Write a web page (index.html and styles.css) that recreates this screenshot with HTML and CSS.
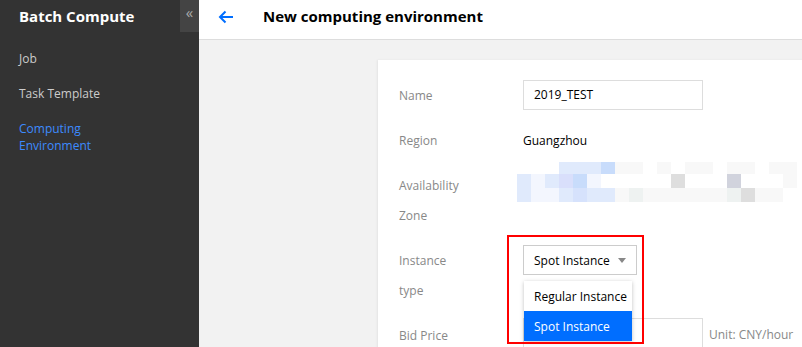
FILE: index.html
```html
<html>
    <head>
        <link rel="stylesheet" href="styles.css">
    </head>
    <body>
    <div class="app">
        <div class="sidebar">
            <div class="brand">
                <span class="brand-title">Batch Compute</span>
                <span class="collapse">&laquo;</span>
            </div>
            <a class="nav">Job</a>
            <a class="nav">Task Template</a>
            <a class="nav active">Computing<br>Environment</a>
        </div>

        <div class="main">
            <div class="topbar">
                <svg class="back" width="16" height="14" viewBox="0 0 16 14">
                    <path d="M15 7H2M7.5 1.5L2 7l5.5 5.5" fill="none" stroke="#006eff" stroke-width="2"/>
                </svg>
                <span class="page-title">New computing environment</span>
            </div>

            <div class="content">
                <div class="card">
                    <div class="row">
                        <div class="label">Name</div>
                        <div class="value"><div class="input">2019_TEST</div></div>
                    </div>
                    <div class="row">
                        <div class="label">Region</div>
                        <div class="value text">Guangzhou</div>
                    </div>
                    <div class="row">
                        <div class="label">Availability Zone</div>
                        <div class="value">
                            <div class="mosaic">
                                <i></i><i></i><i></i><i class="b1"></i><i class="b1"></i><i class="b1"></i><i class="b2"></i><i class="g0"></i><i class="g0"></i><i></i>
                                <i class="g0"></i><i></i><i class="g0"></i><i class="g0"></i><i></i><i class="g0"></i><i class="g0"></i><i></i><i class="g0"></i><i class="g0"></i>

                                <i class="b1"></i><i class="b3"></i><i class="b1"></i><i class="b4"></i><i class="b2"></i><i class="b3"></i><i></i><i></i><i></i><i></i>
                                <i></i><i class="g2"></i><i></i><i></i><i></i><i class="g3"></i><i></i><i></i><i></i><i class="g0"></i>

                                <i class="b1"></i><i class="b3"></i><i class="b3"></i><i class="b1"></i><i class="b5"></i><i class="b1"></i><i class="b1"></i><i class="g0"></i><i class="g1"></i><i class="g0"></i>
                                <i class="g0"></i><i class="g0"></i><i class="g0"></i><i class="g0"></i><i class="g0"></i><i class="g1"></i><i class="g2"></i><i class="g0"></i><i class="g0"></i><i></i>
                            </div>
                        </div>
                    </div>
                    <div class="row">
                        <div class="label">Instance type</div>
                        <div class="value">
                            <div class="select">
                                Spot Instance
                                <span class="caret"></span>
                                <div class="menu">
                                    <div class="option">Regular Instance</div>
                                    <div class="option selected">Spot Instance</div>
                                </div>
                                <div class="highlight"></div>
                            </div>
                        </div>
                    </div>
                    <div class="row bid">
                        <div class="label">Bid Price</div>
                        <div class="value inline">
                            <div class="input tall"></div>
                            <span class="unit">Unit: CNY/hour</span>
                        </div>
                    </div>
                </div>
            </div>
        </div>
    </div>
    </body>
</html>
```

FILE: styles.css
```css
body {
    margin: 0;
    font-family: "Open Sans", "Noto Sans", sans-serif;
    font-size: 12px;
    overflow: hidden;
}
.app {
    display: flex;
    height: 347px;
}
.sidebar {
    width: 199px;
    flex: none;
    background-color: #333333;
}
.brand {
    display: flex;
    justify-content: space-between;
    height: 32px;
}
.brand-title {
    color: white;
    font-weight: bold;
    font-size: 15px;
    padding: 6px 0 0 19px;
}
.collapse {
    width: 19px;
    background-color: #444444;
    color: #aaaaaa;
    font-size: 15px;
    text-align: center;
    line-height: 24px;
}
.nav {
    display: block;
    color: #cccccc;
    padding-left: 19px;
    line-height: 17px;
    margin-top: 18px;
}
.nav.active {
    color: #3d8bff;
}
.main {
    flex: 1;
    display: flex;
    flex-direction: column;
    overflow: hidden;
}
.topbar {
    height: 39px;
    flex: none;
    background-color: white;
    border-bottom: 1px solid #dddddd;
    display: flex;
    align-items: center;
}
.back {
    margin-left: 19px;
    margin-top: -6px;
}
.page-title {
    font-weight: bold;
    font-size: 15px;
    color: #000000;
    margin-left: 29px;
    margin-top: -7px;
}
.content {
    flex: 1;
    background-color: #f2f2f2;
    padding: 20px 0 0 179px;
}
.card {
    background-color: white;
    width: 600px;
    height: 400px;
    padding: 20px 0 0 21px;
    box-sizing: border-box;
    box-shadow: -1px 0 2px rgba(0,0,0,0.06);
}
.row {
    display: flex;
    margin-bottom: 14px;
}
.row.bid {
    margin-top: 7px;
}
.label {
    width: 124px;
    flex: none;
    padding: 1px 50px 0 0;
    box-sizing: border-box;
    color: #888888;
    line-height: 30px;
}
.value.text {
    line-height: 30px;
    padding-top: 1px;
    color: #000000;
}
.value.inline {
    display: flex;
    align-items: flex-start;
}
.input {
    width: 180px;
    height: 30px;
    box-sizing: border-box;
    border: 1px solid #dddddd;
    padding-left: 10px;
    line-height: 28px;
    color: #000000;
}
.input.tall {
    height: 40px;
    margin-top: -2px;
}
.unit {
    color: #888888;
    line-height: 30px;
    margin-left: 6px;
}
.mosaic {
    display: grid;
    grid-template-columns: repeat(20, 14px);
    grid-template-rows: 12px 14px 14px;
    margin: -8px 0 0 -6px;
}
.mosaic .b1 { background-color: #e0eafc; }
.mosaic .b2 { background-color: #c8dcfb; }
.mosaic .b3 { background-color: #f3f6fe; }
.mosaic .b4 { background-color: #d9dffb; }
.mosaic .b5 { background-color: #d6e2fc; }
.mosaic .g0 { background-color: #f8f8f8; }
.mosaic .g1 { background-color: #eef2f1; }
.mosaic .g2 { background-color: #dedede; }
.mosaic .g3 { background-color: #d1d3dd; }
.select {
    position: relative;
    width: 114px;
    height: 30px;
    box-sizing: border-box;
    border: 1px solid #cccccc;
    padding-left: 10px;
    line-height: 29px;
    color: #000000;
}
.caret {
    position: absolute;
    right: 10px;
    top: 12px;
    border-left: 4px solid transparent;
    border-right: 4px solid transparent;
    border-top: 5px solid #888888;
}
.menu {
    position: absolute;
    left: 0;
    top: 35px;
    width: 108px;
    background-color: white;
    box-shadow: 0 1px 4px rgba(0,0,0,0.25);
    z-index: 2;
}
.option {
    height: 30px;
    line-height: 32px;
    padding-left: 10px;
    color: #000000;
}
.option.selected {
    background-color: #006eff;
    color: white;
}
.highlight {
    position: absolute;
    left: -17px;
    top: -11px;
    width: 137px;
    height: 109px;
    box-sizing: border-box;
    border: 2px solid #ff0000;
    z-index: 3;
}
```
